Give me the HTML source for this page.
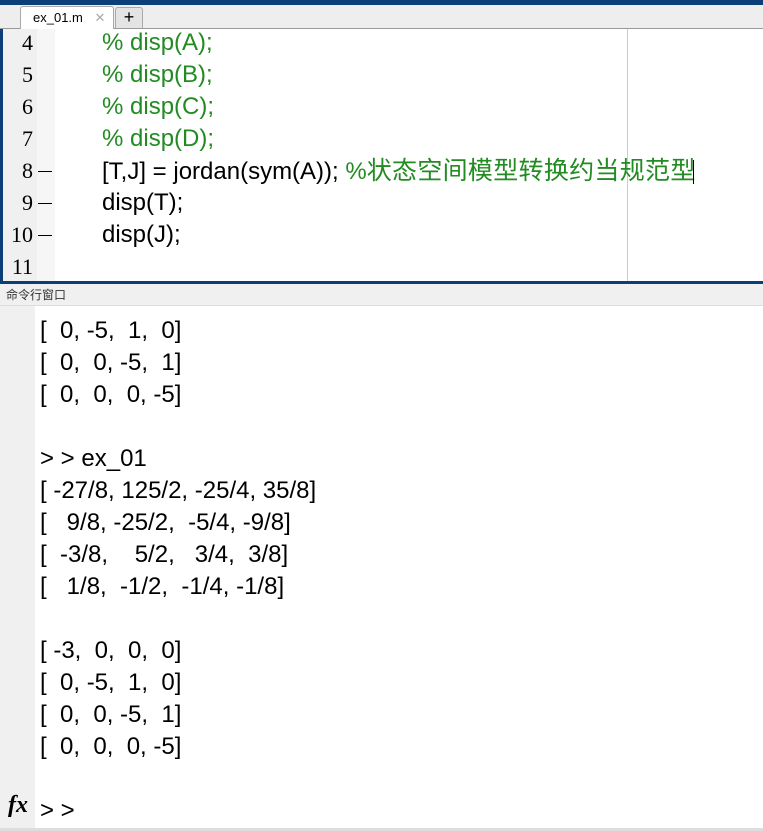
<!DOCTYPE html>
<html><head><meta charset="utf-8"><style>
*{margin:0;padding:0;box-sizing:border-box}
body{width:763px;height:831px;overflow:hidden;background:#fff;position:relative;font-family:"Liberation Sans","Noto Sans CJK SC",sans-serif}
.abs{position:absolute}
.l{position:absolute;font-size:24px;white-space:pre;line-height:32px;color:#000}
.g{color:#228b22}
.c{font-size:25px;letter-spacing:0.3px}
.n{position:absolute;left:0;width:33px;text-align:right;font-family:"Liberation Serif",serif;font-size:22px;line-height:32px;color:#000}
.d{position:absolute;left:38px;width:14px;height:1px;background:#000}
</style></head><body>
<div class="abs" style="left:0;top:0;width:763px;height:5px;background:#0b3f78"></div>
<div class="abs" style="left:0;top:5px;width:763px;height:23px;background:#eeeeee"></div>
<div class="abs" style="left:0;top:28px;width:763px;height:1px;background:#9a9a9a"></div>
<div class="abs" style="left:20px;top:6px;width:94px;height:23px;background:#fff;border:1px solid #aaa;border-bottom:none;border-radius:3px 3px 0 0;font-size:13px;line-height:21px;padding-left:12px">ex_01.m <span style="color:#aaa;margin-left:8px">✕</span></div>
<div class="abs" style="left:115px;top:7px;width:28px;height:21px;background:#e4e4e4;border:1px solid #aaa;border-bottom:none;border-radius:3px 3px 0 0;font-size:18px;line-height:19px;text-align:center">+</div>
<div class="abs" style="left:0;top:29px;width:3px;height:255px;background:#0b3f78"></div>
<div class="abs" style="left:3px;top:29px;width:34px;height:252px;background:#f0f0f0"></div>
<div class="abs" style="left:37px;top:29px;width:18px;height:252px;background:#f6f6f6"></div>
<div class="abs" style="left:627px;top:29px;width:1px;height:252px;background:#ccc"></div>
<div class="abs" style="left:0;top:281px;width:763px;height:3px;background:#0b3f78"></div>
<div class="n" style="top:27px">4</div><div class="n" style="top:59px">5</div><div class="n" style="top:91px">6</div><div class="n" style="top:123px">7</div>
<div class="n" style="top:155px">8</div><div class="n" style="top:187px">9</div><div class="n" style="top:219px">10</div><div class="n" style="top:251px">11</div>
<div class="d" style="top:171px"></div><div class="d" style="top:203px"></div><div class="d" style="top:235px"></div>
<div class="l g" style="left:102px;top:27px">% disp(A);</div>
<div class="l g" style="left:102px;top:59px">% disp(B);</div>
<div class="l g" style="left:102px;top:91px">% disp(C);</div>
<div class="l g" style="left:102px;top:123px">% disp(D);</div>
<div class="l" style="left:102px;top:155px">[T,J] = jordan(sym(A)); <span class="g">%<span class="c">状态空间模型转换约当规范型</span></span></div>
<div class="abs" style="left:693px;top:160px;width:1px;height:24px;background:#000"></div>
<div class="l" style="left:102px;top:187px">disp(T);</div>
<div class="l" style="left:102px;top:219px">disp(J);</div>
<div class="abs" style="left:0;top:284px;width:763px;height:22px;background:#f0f0f0;border-bottom:1px solid #ddd;font-size:12px;line-height:22px;padding-left:6px;color:#333">命令行窗口</div>
<div class="abs" style="left:0;top:306px;width:35px;height:522px;background:#f0f0f0"></div>
<div class="abs" style="left:0;top:828px;width:763px;height:3px;background:#ddd"></div>
<div class="l" style="left:40px;top:315px">[  0, -5,  1,  0]</div>
<div class="l" style="left:40px;top:347px">[  0,  0, -5,  1]</div>
<div class="l" style="left:40px;top:379px">[  0,  0,  0, -5]</div>
<div class="l" style="left:40px;top:443px">&gt; &gt; ex_01</div>
<div class="l" style="left:40px;top:475px">[ -27/8, 125/2, -25/4, 35/8]</div>
<div class="l" style="left:40px;top:507px">[   9/8, -25/2,  -5/4, -9/8]</div>
<div class="l" style="left:40px;top:539px">[  -3/8,    5/2,   3/4,  3/8]</div>
<div class="l" style="left:40px;top:571px">[   1/8,  -1/2,  -1/4, -1/8]</div>
<div class="l" style="left:40px;top:635px">[ -3,  0,  0,  0]</div>
<div class="l" style="left:40px;top:667px">[  0, -5,  1,  0]</div>
<div class="l" style="left:40px;top:699px">[  0,  0, -5,  1]</div>
<div class="l" style="left:40px;top:731px">[  0,  0,  0, -5]</div>
<div class="abs" style="left:8px;top:792px;font-family:'Liberation Serif',serif;font-style:italic;font-weight:bold;font-size:24px">fx</div>
<div class="l" style="left:40px;top:795px">&gt; &gt;</div>
</body></html>
